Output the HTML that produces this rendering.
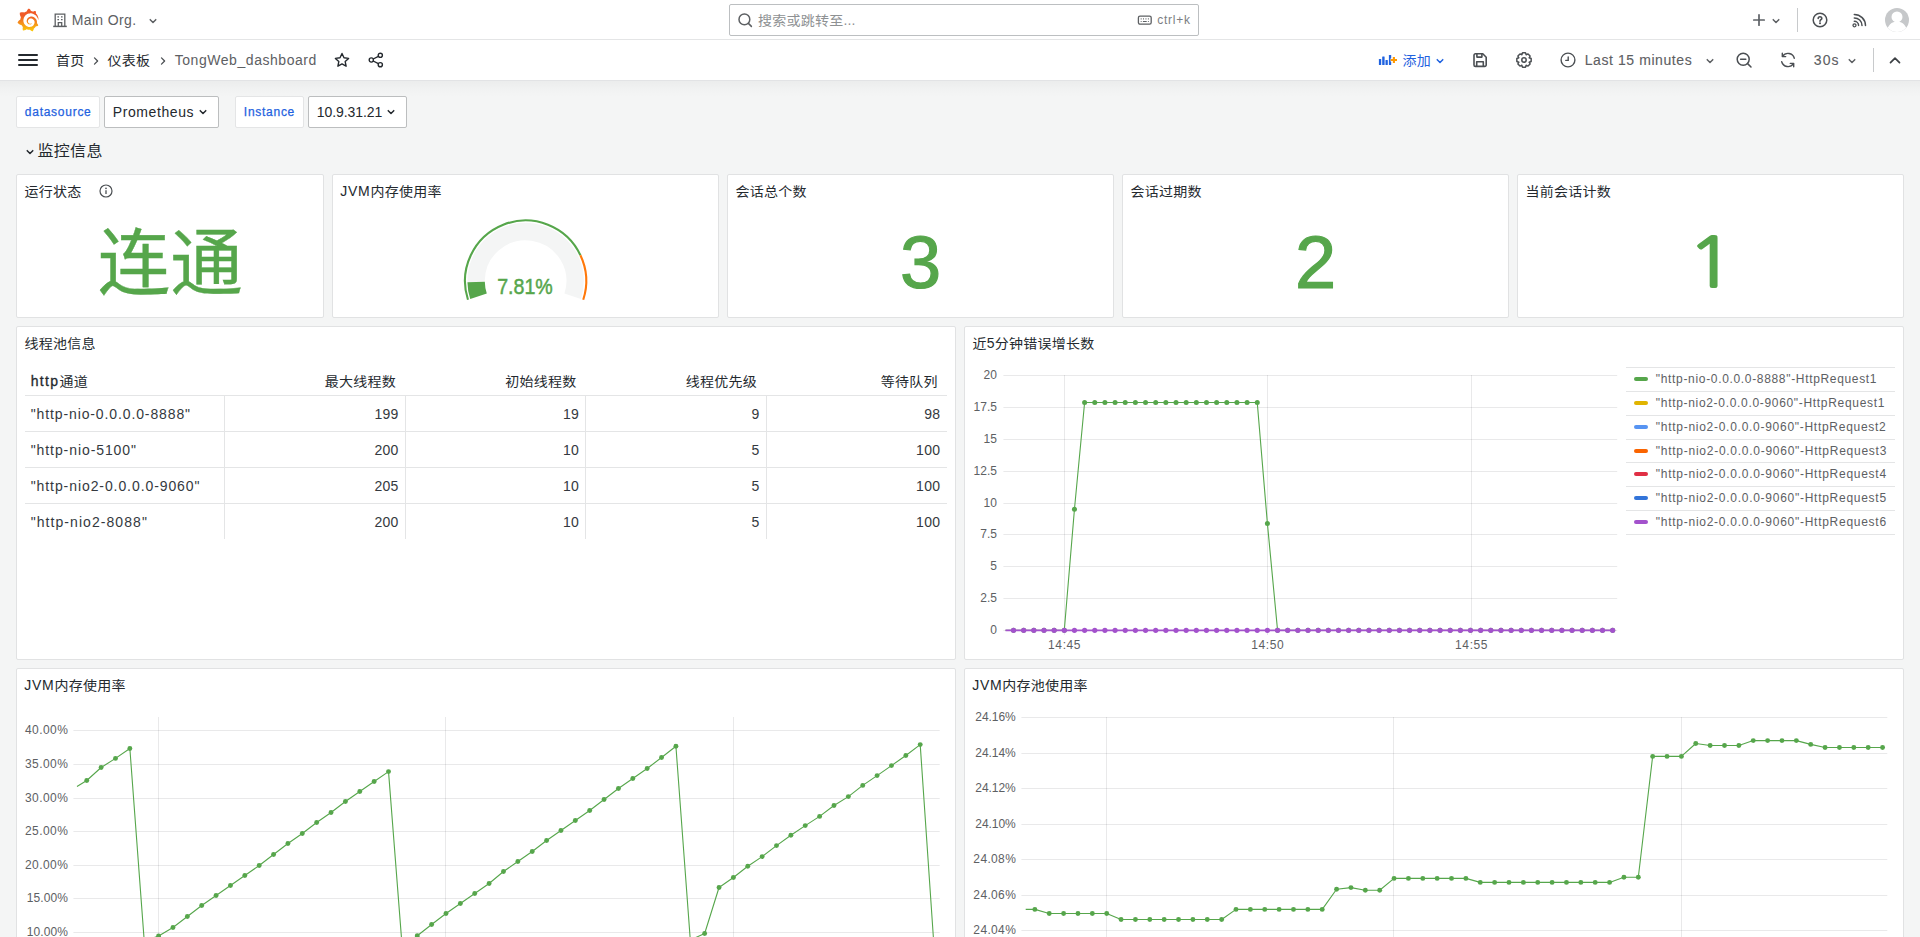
<!DOCTYPE html>
<html lang="zh-CN"><head><meta charset="utf-8"><title>TongWeb_dashboard - Grafana</title>
<style>
html,body{margin:0;padding:0}
body{width:1920px;height:937px;overflow:hidden;position:relative;background:#f4f5f5;font-family:"Liberation Sans","Noto Sans CJK SC",sans-serif;color:#24292e;-webkit-font-smoothing:antialiased}
.t{position:absolute;white-space:nowrap;line-height:1;display:block}
.b{position:absolute;box-sizing:border-box;display:block}
.p{position:absolute;box-sizing:border-box;background:#fff;border:1px solid #e1e2e3;border-radius:2px}
.c{-webkit-text-stroke:0;letter-spacing:.018em;display:inline-block;transform:scaleY(.92);transform-origin:50% 48%}
svg{overflow:visible}
svg text{font-family:"Liberation Sans","Noto Sans CJK SC",sans-serif}
</style></head><body>
<div class="b" style="left:0px;top:0px;width:1920px;height:40px;background:#fff;border-bottom:1px solid #e4e5e6"></div>
<div class="b" style="left:0px;top:40px;width:1920px;height:41px;background:#fff;border-bottom:1px solid #e2e3e5"></div>
<div class="b" style="left:0px;top:81px;width:1920px;height:16px;background:linear-gradient(rgba(0,0,0,.036),rgba(0,0,0,.012) 55%,rgba(0,0,0,0))"></div>
<svg class="b" style="left:17px;top:8px;" width="22" height="24" viewBox="0 0 351 365"><defs><linearGradient id="gl" gradientUnits="userSpaceOnUse" x1="175.5" y1="445.5" x2="175.5" y2="114"><stop offset="0" stop-color="#fff100"/><stop offset="1" stop-color="#f05a28"/></linearGradient></defs><path fill="url(#gl)" d="M342,161.2c-0.6-6.1-1.6-13.1-3.6-20.9c-2-7.7-5-16.2-9.4-25c-4.4-8.8-10.1-17.9-17.500-26.800c-2.900-3.500-6.100-6.900-9.500-10.200c5.100-20.300-6.200-37.900-6.200-37.900c-19.500-1.200-31.900,6.100-36.500,9.400c-0.800-0.300-1.500-0.700-2.300-1c-3.300-1.300-6.700-2.600-10.300-3.700c-3.500-1.100-7.100-2.100-10.800-3c-3.700-0.900-7.400-1.600-11.200-2.200c-0.700-0.100-1.300-0.200-2-0.300c-8.500-27.200-32.900-38.600-32.900-38.600c-27.300,17.300-32.400,41.500-32.400,41.500s-0.100,0.500-0.300,1.400c-1.500,0.400-3,0.900-4.500,1.300c-2.100,0.600-4.200,1.400-6.200,2.200c-2.100,0.800-4.100,1.600-6.200,2.500c-4.100,1.800-8.200,3.800-12.200,6c-3.900,2.200-7.700,4.600-11.400,7.100c-0.500-0.200-1-0.400-1-0.400c-37.800-14.400-71.300,2.900-71.300,2.900c-3.100,40.200,15.100,65.500,18.700,70.100c-0.900,2.500-1.700,5-2.500,7.500c-2.800,9.100-4.900,18.400-6.200,28.100c-0.200,1.400-0.400,2.800-0.500,4.200C18.800,192.700,8.500,228,8.500,228c29.100,33.500,63.100,35.600,63.100,35.600c0,0,0.100-0.100,0.100-0.100c4.300,7.700,9.300,15,14.900,21.900c2.400,2.900,4.800,5.600,7.400,8.300c-10.600,30.400,1.500,55.600,1.500,55.600c32.400,1.200,53.700-14.200,58.200-17.700c3.200,1.100,6.500,2.100,9.800,2.900c10,2.600,20.200,4.100,30.400,4.500c2.500,0.100,5.100,0.200,7.600,0.100l1.200,0l0.800,0l1.600,0l1.600-0.100l0,0.100c15.300,21.800,42.100,24.900,42.100,24.900c19.100-20.100,20.200-40.100,20.200-44.400l0,0c0,0,0-0.100,0-0.300c0-0.400,0-0.600,0-0.600l0,0c0-0.300,0-0.600,0-0.900c4-2.800,7.800-5.800,11.400-9.100c7.600-6.900,14.300-14.800,19.900-23.300c0.500-0.800,1-1.600,1.500-2.400c21.600,1.200,36.900-13.400,36.900-13.400c-3.600-22.500-16.400-33.500-19.100-35.600l0,0c0,0-0.100-0.100-0.300-0.200c-0.200-0.100-0.200-0.200-0.200-0.200c0,0,0,0,0,0c-0.100-0.100-0.300-0.200-0.500-0.300c0.100-1.400,0.200-2.700,0.300-4.100c0.200-2.400,0.200-4.900,0.200-7.300l0-1.800l0-0.900l0-0.500c0-0.600,0-0.400,0-0.600l-0.100-1.500l-0.100-2c0-0.700-0.100-1.300-0.200-1.900c-0.100-0.600-0.100-1.300-0.200-1.900l-0.200-1.900l-0.300-1.900c-0.400-2.500-0.800-4.900-1.400-7.400c-2.300-9.700-6.100-18.900-11-27.200c-5-8.300-11.200-15.600-18.300-21.800c-7-6.200-14.900-11.200-23.100-14.900c-8.300-3.700-16.900-6.100-25.500-7.200c-4.300-0.600-8.600-0.800-12.900-0.700l-1.600,0l-0.400,0c-0.100,0-0.600,0-0.500,0l-0.700,0l-1.600,0.100c-0.600,0-1.200,0.100-1.700,0.100c-2.200,0.200-4.400,0.500-6.500,0.900c-8.600,1.600-16.700,4.700-23.800,9c-7.100,4.300-13.300,9.600-18.300,15.600c-5,6-8.900,12.700-11.600,19.600c-2.700,6.900-4.200,14.100-4.600,21c-0.100,1.700-0.100,3.500-0.100,5.200c0,0.400,0,0.900,0,1.300l0.100,1.400c0.100,0.800,0.100,1.700,0.200,2.500c0.300,3.500,1,6.900,1.900,10.100c1.900,6.500,4.900,12.400,8.600,17.400c3.700,5,8.200,9.100,12.900,12.400c4.700,3.200,9.800,5.500,14.800,7c5,1.500,10,2.100,14.700,2.100c0.600,0,1.200,0,1.700,0c0.300,0,0.600,0,0.900,0c0.300,0,0.600,0,0.900-0.100c0.500,0,1-0.100,1.500-0.100c0.100,0,0.300,0,0.400-0.100l0.500-0.100c0.300,0,0.600-0.100,0.900-0.100c0.600-0.100,1.100-0.200,1.700-0.300c0.600-0.100,1.100-0.200,1.600-0.400c1.100-0.200,2.100-0.600,3.100-0.900c2-0.700,4-1.500,5.700-2.400c1.800-0.900,3.400-2,5-3c0.400-0.300,0.900-0.600,1.300-1c1.600-1.300,1.900-3.700,0.600-5.300c-1.100-1.400-3.100-1.800-4.700-0.900c-0.400,0.200-0.800,0.400-1.200,0.600c-1.400,0.700-2.800,1.300-4.300,1.800c-1.500,0.500-3.100,0.900-4.700,1.200c-0.800,0.100-1.600,0.200-2.500,0.300c-0.400,0-0.800,0.100-1.300,0.100c-0.400,0-0.900,0-1.200,0c-0.400,0-0.800,0-1.200,0c-0.500,0-1,0-1.500-0.100c0,0-0.300,0-0.100,0l-0.200,0l-0.300,0c-0.200,0-0.500,0-0.700-0.100c-0.500-0.100-0.900-0.100-1.400-0.200c-3.700-0.500-7.400-1.600-10.900-3.200c-3.600-1.600-7-3.800-10.100-6.600c-3.100-2.800-5.800-6.100-7.900-9.900c-2.100-3.800-3.600-8-4.300-12.400c-0.300-2.200-0.500-4.500-0.400-6.700c0-0.600,0.100-1.200,0.100-1.800c0,0.200,0-0.100,0-0.100l0-0.200l0-0.500c0-0.300,0.100-0.600,0.100-0.900c0.100-1.200,0.300-2.400,0.500-3.600c1.700-9.600,6.500-19,13.900-26.100c1.900-1.800,3.900-3.400,6-4.900c2.100-1.500,4.400-2.800,6.800-3.900c2.400-1.100,4.800-2,7.400-2.700c2.500-0.700,5.100-1.100,7.800-1.400c1.300-0.100,2.600-0.200,4-0.200c0.400,0,0.600,0,0.900,0l1.100,0l0.700,0c0.300,0,0,0,0.100,0l0.300,0l1.100,0.100c2.900,0.200,5.700,0.600,8.500,1.300c5.600,1.200,11.100,3.300,16.200,6.100c10.200,5.700,18.900,14.500,24.200,25.100c2.700,5.300,4.600,11,5.500,16.900c0.200,1.500,0.400,3,0.500,4.500l0.100,1.100l0.100,1.100c0,0.400,0,0.800,0,1.100c0,0.400,0,0.800,0,1.100l0,1l0,1.100c0,0.700-0.100,1.900-0.100,2.600c-0.100,1.600-0.300,3.300-0.500,4.900c-0.200,1.600-0.500,3.200-0.800,4.800c-0.300,1.600-0.700,3.200-1.100,4.700c-0.800,3.100-1.800,6.200-3,9.300c-2.400,6-5.600,11.800-9.400,17.100c-7.700,10.600-18.200,19.200-30.200,24.700c-6,2.700-12.300,4.700-18.800,5.700c-3.200,0.600-6.500,0.900-9.800,1l-0.600,0l-0.500,0l-1.100,0l-1.600,0l-0.800,0c0.400,0-0.100,0-0.100,0l-0.300,0c-1.800,0-3.500-0.100-5.300-0.300c-7-0.500-13.900-1.800-20.700-3.700c-6.700-1.900-13.200-4.600-19.400-7.800c-12.300-6.600-23.400-15.600-32-26.500c-4.300-5.400-8.100-11.300-11.200-17.400c-3.100-6.100-5.600-12.600-7.400-19.100c-1.800-6.600-2.900-13.300-3.400-20.100l-0.100-1.300l0-0.300l0-0.300l0-0.600l0-1.100l0-0.300l0-0.400l0-0.800l0-1.600l0-0.300c0,0,0,0.100,0-0.100l0-0.600c0-0.800,0-1.700,0-2.500c0.100-3.300,0.400-6.800,0.800-10.200c0.400-3.400,1-6.900,1.700-10.300c0.700-3.400,1.500-6.800,2.500-10.200c1.900-6.700,4.300-13.200,7.100-19.300c5.700-12.200,13.100-23.100,22-31.800c2.200-2.200,4.500-4.200,6.900-6.200c2.400-1.900,4.900-3.700,7.500-5.400c2.500-1.700,5.200-3.200,7.900-4.600c1.300-0.700,2.700-1.400,4.100-2c0.700-0.300,1.400-0.600,2.100-0.900c0.700-0.300,1.400-0.600,2.100-0.900c2.800-1.200,5.700-2.200,8.700-3.100c0.700-0.200,1.500-0.400,2.200-0.700c0.700-0.200,1.500-0.400,2.200-0.600c1.500-0.400,3-0.800,4.500-1.100c0.700-0.200,1.500-0.300,2.300-0.500c0.800-0.200,1.500-0.300,2.300-0.500c0.800-0.100,1.500-0.300,2.300-0.400l1.100-0.200l1.200-0.200c0.800-0.100,1.500-0.200,2.300-0.300c0.900-0.100,1.700-0.200,2.600-0.300c0.700-0.100,1.900-0.200,2.600-0.300c0.500-0.100,1.100-0.100,1.600-0.200l1.100-0.100l0.500-0.100l0.600,0c0.900-0.100,1.700-0.100,2.600-0.200l1.300-0.100c0,0,0.500,0,0.100,0l0.300,0l0.600,0c0.700,0,1.500-0.100,2.200-0.100c2.900-0.100,5.900-0.100,8.800,0c5.800,0.200,11.500,0.900,17,1.900c11.100,2.100,21.500,5.600,31,10.300c9.500,4.600,17.900,10.300,25.300,16.500c0.500,0.400,0.900,0.800,1.400,1.200c0.400,0.400,0.900,0.800,1.300,1.200c0.900,0.800,1.700,1.600,2.600,2.400c0.900,0.800,1.700,1.600,2.500,2.400c0.800,0.800,1.600,1.600,2.400,2.500c3.100,3.300,6,6.600,8.600,10c5.200,6.700,9.400,13.500,12.700,19.900c0.200,0.400,0.400,0.800,0.600,1.200c0.200,0.400,0.400,0.800,0.600,1.200c0.400,0.800,0.800,1.600,1.100,2.400c0.400,0.800,0.700,1.500,1.100,2.300c0.300,0.800,0.700,1.500,1,2.300c1.200,3,2.400,5.900,3.300,8.600c1.500,4.400,2.600,8.300,3.500,11.700c0.300,1.400,1.600,2.300,3,2.100c1.500-0.100,2.600-1.300,2.600-2.800C342.600,170.400,342.500,166.100,342,161.200z"/></svg>
<svg class="b" style="left:52px;top:12px;" width="16" height="16" viewBox="0 0 16 16"><g fill="none" stroke="#5d6063" stroke-width="1.3"><path d="M3.2 14.3V2.2h9.6v12.1"/><path d="M1.2 14.4h13.6" stroke-width="1.5"/><path d="M6.3 14.3v-3.6h3.4v3.6"/><path d="M5.4 4.9h1.6M9 4.9h1.6M5.4 7.6h1.6M9 7.6h1.6" stroke-width="1.4"/></g></svg>
<span id="t1" class="t" style="top:13.15px;font-size:14px;color:#5d6063;letter-spacing:0.359px;left:71.73px;">Main Org.</span>
<svg class="b" style="left:148px;top:16px;" width="10" height="10" viewBox="0 0 10 10"><path d="M2.23 3.66L5 6.43L7.77 3.66" fill="none" stroke="#5d6063" stroke-width="1.5" stroke-linecap="round" stroke-linejoin="round"/></svg>
<div class="b" style="left:729px;top:4px;width:470px;height:32px;background:#fff;border:1px solid #bcbfc1;border-radius:2px"></div>
<svg class="b" style="left:737px;top:12px;" width="16" height="16" viewBox="0 0 16 16"><g fill="none" stroke="#5d6063" stroke-width="1.5" stroke-linecap="round"><circle cx="7.4" cy="7.4" r="5.4"/><path d="M11.4 11.4L14.4 14.4"/></g></svg>
<span id="t2" class="t" style="top:13.15px;font-size:14px;color:#8e9193;letter-spacing:0.004px;left:758.08px;"><span class="c">搜索或跳转至</span>...</span>
<svg class="b" style="left:1137px;top:14px;" width="16" height="12" viewBox="0 0 16 12"><g fill="none" stroke="#5d6063" stroke-width="1.3"><rect x="1.400" y="2.100" width="12.800" height="8.100" rx="1.600"/><path d="M3.700 4.900h.9M6.100 4.900h.9M8.500 4.900h.9M10.900 4.900h.9M3.700 7.500h.9M5.900 7.500h3.800M10.900 7.500h.9" stroke-width="1.100"/></g></svg>
<span id="t3" class="t" style="top:13.84px;font-size:12px;color:#7b7e82;letter-spacing:0.781px;left:1157.14px;">ctrl+k</span>
<svg class="b" style="left:1753px;top:14px;" width="12" height="12" viewBox="0 0 12 12"><path d="M6 0.800V11.200M0.800 6H11.200" stroke="#5d6166" stroke-width="1.700" fill="none" stroke-linecap="round"/></svg>
<svg class="b" style="left:1771px;top:16px;" width="10" height="10" viewBox="0 0 10 10"><path d="M2.23 3.66L5 6.43L7.77 3.66" fill="none" stroke="#5d6063" stroke-width="1.5" stroke-linecap="round" stroke-linejoin="round"/></svg>
<div class="b" style="left:1797px;top:8px;width:1px;height:24px;background:#c8cacc"></div>
<svg class="b" style="left:1812px;top:12px;" width="16" height="16" viewBox="0 0 16 16"><g fill="none" stroke="#4b4f53" stroke-width="1.500"><circle cx="8" cy="8" r="6.800"/><path d="M6.200 6.500c0-1.100.8-1.800 1.800-1.800s1.800.7 1.800 1.700c0 1.300-1.800 1.400-1.800 2.800" stroke-width="1.600" stroke-linecap="round"/></g><circle cx="8" cy="11.300" r="1" fill="#4b4f53"/></svg>
<svg class="b" style="left:1852px;top:13px;" width="15" height="15" viewBox="0 0 15 15"><g fill="none" stroke="#4b4f53" stroke-width="1.500" stroke-linecap="round"><path d="M2.300 1.400a11.200 11.200 0 0 1 11.200 11"/><path d="M2.300 4.900a7.700 7.700 0 0 1 7.700 7.500"/><path d="M2.300 8.300a4.300 4.300 0 0 1 4.300 4.100"/></g><circle cx="2.500" cy="12.300" r="1.500" fill="none" stroke="#4b4f53" stroke-width="1.300"/></svg>
<svg class="b" style="left:1885px;top:8px;" width="24" height="24" viewBox="0 0 24 24"><defs><clipPath id="av"><circle cx="12" cy="12" r="12"/></clipPath></defs><circle cx="12" cy="12" r="12" fill="#c6c8ca"/><g clip-path="url(#av)" fill="#fff"><circle cx="12" cy="8.900" r="5.500"/><path d="M1.500 27c0-8.500 4.300-13.400 10.500-13.400s10.500 4.900 10.500 13.400z"/></g></svg>
<div class="b" style="left:18px;top:54px;width:20px;height:2px;background:#24292e;border-radius:1px"></div>
<div class="b" style="left:18px;top:59px;width:20px;height:2px;background:#24292e;border-radius:1px"></div>
<div class="b" style="left:18px;top:64px;width:20px;height:2px;background:#24292e;border-radius:1px"></div>
<span id="t4" class="t" style="top:53.35px;font-size:14px;color:#24292e;left:56.08px;"><span class="c">首页</span></span>
<svg class="b" style="left:92px;top:55px;" width="8" height="10" viewBox="0 0 8 10"><path d="M2.500 2.900L5.600 6L2.500 9.100" fill="none" stroke="#4b4f53" stroke-width="1.3" stroke-linecap="round" stroke-linejoin="round"/></svg>
<span id="t5" class="t" style="top:53.35px;font-size:14px;color:#24292e;left:107.58px;"><span class="c">仪表板</span></span>
<svg class="b" style="left:159px;top:55px;" width="8" height="10" viewBox="0 0 8 10"><path d="M2.500 2.900L5.600 6L2.500 9.100" fill="none" stroke="#4b4f53" stroke-width="1.3" stroke-linecap="round" stroke-linejoin="round"/></svg>
<span id="t6" class="t" style="top:53.15px;font-size:14px;color:#5d6063;letter-spacing:0.550px;left:174.73px;">TongWeb_dashboard</span>
<svg class="b" style="left:334px;top:52px;" width="16" height="16" viewBox="0 0 16 16"><path d="M8 1.5l2 4.3 4.6.6-3.4 3.2.9 4.6L8 11.9l-4.100 2.300.9-4.600L1.400 6.400l4.600-.6z" fill="none" stroke="#24292e" stroke-width="1.4" stroke-linejoin="round"/></svg>
<svg class="b" style="left:368px;top:52px;" width="16" height="16" viewBox="0 0 16 16"><g fill="none" stroke="#24292e" stroke-width="1.4"><circle cx="12.3" cy="3.3" r="2.1"/><circle cx="3.3" cy="8" r="2.1"/><circle cx="12.3" cy="12.700" r="2.1"/><path d="M5.200 7l5.200-2.700M5.200 9l5.200 2.700"/></g></svg>
<svg class="b" style="left:1378px;top:53px;" width="20" height="14" viewBox="0 0 20 14"><g fill="#1f62e0"><rect x="0.900" y="6" width="2.300" height="5.900" rx=".5"/><rect x="4.200" y="3.400" width="2.400" height="8.500" rx=".5"/><rect x="7.500" y="7" width="2.300" height="4.900" rx=".5"/><rect x="10.900" y="2" width="2.300" height="9.900" rx=".5"/></g><path d="M15.900 3.700v6.600M12.600 7h6.600" stroke="#fff" stroke-width="3.600" fill="none"/><path d="M15.900 3.900v6.200M12.800 7h6.200" stroke="#ff9900" stroke-width="2.100" fill="none"/></svg>
<span id="t7" class="t" style="top:53.35px;font-size:14px;color:#1f62e0;left:1402.58px;"><span class="c">添加</span></span>
<svg class="b" style="left:1435px;top:55.6px;" width="10" height="10" viewBox="0 0 10 10"><path d="M2.23 3.66L5 6.43L7.77 3.66" fill="none" stroke="#1f62e0" stroke-width="1.5" stroke-linecap="round" stroke-linejoin="round"/></svg>
<svg class="b" style="left:1472px;top:52px;" width="16" height="16" viewBox="0 0 16 16"><g fill="none" stroke="#4b4f53" stroke-width="1.600" stroke-linejoin="round"><path d="M3.400 1.800h7.400L14.200 5.200v7.800a1.400 1.400 0 0 1-1.400 1.400H3.400a1.400 1.400 0 0 1-1.400-1.400V3.200a1.400 1.400 0 0 1 1.400-1.400z"/><path d="M4.900 1.800v3.300h5V1.800M4.700 14.400V9.700h6.600v4.700"/></g></svg>
<svg class="b" style="left:1516px;top:52px;" width="16" height="16" viewBox="0 0 16 16"><g fill="none" stroke="#4b4f53" stroke-width="1.500" stroke-linejoin="round"><path d="M15.15 6.55L15.15 9.45L13.20 10.32L13.32 10.04L14.08 12.03L12.03 14.08L10.04 13.32L10.32 13.20L9.45 15.15L6.55 15.15L5.68 13.20L5.96 13.32L3.97 14.08L1.92 12.03L2.68 10.04L2.80 10.32L0.85 9.45L0.85 6.55L2.80 5.68L2.68 5.96L1.92 3.97L3.97 1.92L5.96 2.68L5.68 2.80L6.55 0.85L9.45 0.85L10.32 2.80L10.04 2.68L12.03 1.92L14.08 3.97L13.32 5.96L13.20 5.68Z"/><circle cx="8" cy="8" r="2.200"/></g></svg>
<svg class="b" style="left:1560px;top:52px;" width="16" height="16" viewBox="0 0 16 16"><g fill="none" stroke="#4b4f53" stroke-width="1.4" stroke-linecap="round"><circle cx="8" cy="8" r="6.9"/><path d="M8.200 5V8.400H5.800"/></g></svg>
<span id="t8" class="t" style="top:53.15px;font-size:14px;color:#5d6063;letter-spacing:0.577px;left:1584.73px;-webkit-text-stroke:.12px #5d6063;">Last 15 minutes</span>
<svg class="b" style="left:1705px;top:56px;" width="10" height="10" viewBox="0 0 10 10"><path d="M2.23 3.66L5 6.43L7.77 3.66" fill="none" stroke="#5d6063" stroke-width="1.5" stroke-linecap="round" stroke-linejoin="round"/></svg>
<svg class="b" style="left:1736px;top:52px;" width="16" height="16" viewBox="0 0 16 16"><g fill="none" stroke="#4b4f53" stroke-width="1.5" stroke-linecap="round"><circle cx="7.200" cy="7.200" r="6"/><path d="M11.600 11.600L15 15M4.600 7.200h5.200"/></g></svg>
<svg class="b" style="left:1780px;top:52px;" width="16" height="16" viewBox="0 0 16 16"><g fill="none" stroke="#4b4f53" stroke-width="1.4" stroke-linecap="round" stroke-linejoin="round"><path d="M14.300 6.200A6.500 6.500 0 0 0 2.600 4.300"/><path d="M2.300 1.200v3.400h3.400"/><path d="M1.700 9.800a6.500 6.500 0 0 0 11.700 1.900"/><path d="M13.700 14.800v-3.400h-3.400"/></g></svg>
<span id="t9" class="t" style="top:53.15px;font-size:14px;color:#5d6063;letter-spacing:1.141px;left:1813.73px;-webkit-text-stroke:.12px #5d6063;">30s</span>
<svg class="b" style="left:1847px;top:56px;" width="10" height="10" viewBox="0 0 10 10"><path d="M2.23 3.66L5 6.43L7.77 3.66" fill="none" stroke="#5d6063" stroke-width="1.5" stroke-linecap="round" stroke-linejoin="round"/></svg>
<div class="b" style="left:1873px;top:48px;width:1px;height:24px;background:#c8cacc"></div>
<svg class="b" style="left:1889px;top:55px;" width="12" height="10" viewBox="0 0 12 10"><path d="M1.500 7.600L6 3.100L10.500 7.600" fill="none" stroke="#3d4145" stroke-width="1.700" stroke-linecap="round" stroke-linejoin="round"/></svg>
<div class="b" style="left:16px;top:96px;width:84px;height:32px;background:#fff;border:1px solid #e4e5e6;border-radius:2px"></div>
<span id="t10" class="t" style="top:106.04px;font-size:12px;color:#1f62e0;letter-spacing:0.733px;left:24.84px;-webkit-text-stroke:.25px #1f62e0;">datasource</span>
<div class="b" style="left:104px;top:96px;width:115px;height:32px;background:#fff;border:1px solid #bcbebf;border-radius:2px"></div>
<span id="t11" class="t" style="top:105.15px;font-size:14px;color:#24292e;letter-spacing:0.592px;left:112.73px;">Prometheus</span>
<svg class="b" style="left:198px;top:107px;" width="10" height="10" viewBox="0 0 10 10"><path d="M2.23 3.66L5 6.43L7.77 3.66" fill="none" stroke="#24292e" stroke-width="1.5" stroke-linecap="round" stroke-linejoin="round"/></svg>
<div class="b" style="left:235px;top:96px;width:69px;height:32px;background:#fff;border:1px solid #e4e5e6;border-radius:2px"></div>
<span id="t12" class="t" style="top:106.04px;font-size:12px;color:#1f62e0;letter-spacing:0.728px;left:243.84px;-webkit-text-stroke:.25px #1f62e0;">Instance</span>
<div class="b" style="left:308px;top:96px;width:99px;height:32px;background:#fff;border:1px solid #bcbebf;border-radius:2px"></div>
<span id="t13" class="t" style="top:105.15px;font-size:14px;color:#24292e;letter-spacing:-0.077px;left:316.73px;">10.9.31.21</span>
<svg class="b" style="left:386px;top:107px;" width="10" height="10" viewBox="0 0 10 10"><path d="M2.23 3.66L5 6.43L7.77 3.66" fill="none" stroke="#24292e" stroke-width="1.5" stroke-linecap="round" stroke-linejoin="round"/></svg>
<svg class="b" style="left:25px;top:147px;" width="10" height="10" viewBox="0 0 10 10"><path d="M2.23 3.66L5 6.43L7.77 3.66" fill="none" stroke="#24292e" stroke-width="1.5" stroke-linecap="round" stroke-linejoin="round"/></svg>
<span id="t14" class="t" style="top:143.46px;font-size:16px;color:#24292e;left:37.52px;"><span class="c">监控信息</span></span>
<div class="p" style="left:16px;top:174px;width:308px;height:144px"></div>
<div class="p" style="left:332px;top:174px;width:387px;height:144px"></div>
<div class="p" style="left:727px;top:174px;width:387px;height:144px"></div>
<div class="p" style="left:1122px;top:174px;width:387px;height:144px"></div>
<div class="p" style="left:1517px;top:174px;width:387px;height:144px"></div>
<span id="t15" class="t" style="top:184.35px;font-size:14px;color:#24292e;left:24.58px;"><span class="c">运行状态</span></span>
<svg class="b" style="left:99px;top:184px;" width="14" height="14" viewBox="0 0 14 14"><circle cx="7" cy="7" r="6" fill="none" stroke="#4b4f53" stroke-width="1.2"/><path d="M7 6.300v3.600" stroke="#4b4f53" stroke-width="1.300" fill="none"/><circle cx="7" cy="4.300" r=".85" fill="#4b4f53"/></svg>
<span id="t16" class="t" style="top:184.35px;font-size:14px;color:#24292e;letter-spacing:0.745px;left:340.23px;">JVM<span class="c">内存使用率</span></span>
<span id="t17" class="t" style="top:184.35px;font-size:14px;color:#24292e;left:735.58px;"><span class="c">会话总个数</span></span>
<span id="t18" class="t" style="top:184.35px;font-size:14px;color:#24292e;left:1130.58px;"><span class="c">会话过期数</span></span>
<span id="t19" class="t" style="top:184.35px;font-size:14px;color:#24292e;left:1525.58px;"><span class="c">当前会话计数</span></span>
<span id="t20" class="t" style="top:227.83px;font-size:72.5px;color:#56a64b;left:170.20px;transform:translateX(-50%);-webkit-text-stroke:0.4px #56a64b;">连通</span>
<span id="t21" class="t" style="top:225.86px;font-size:74px;color:#56a64b;left:920.60px;transform:translateX(-50%);-webkit-text-stroke:1.2px #56a64b;">3</span>
<span id="t22" class="t" style="top:225.76px;font-size:74px;color:#56a64b;left:1315.60px;transform:translateX(-50%);-webkit-text-stroke:1.2px #56a64b;">2</span>
<span id="t23" class="t" style="top:228.60px;font-size:68px;color:#56a64b;left:1711.40px;transform:translateX(-50%);font-family:NanumGothic,IPAGothic,sans-serif;-webkit-text-stroke:2px #56a64b;transform:translateX(-50%) scaleX(1.17);">1</span>
<svg class="b" style="left:0;top:0" width="1920" height="937" viewBox="0 0 1920 937"><path d="M476.11 281.98A49.5 49.5 0 1 1 572.68 296.30" fill="none" stroke="#f4f5f5" stroke-width="17.4"/><path d="M478.52 296.30A49.5 49.5 0 0 1 476.11 281.98" fill="none" stroke="#56a64b" stroke-width="17.4"/><path d="M467.97 299.73A60.6 60.6 0 0 1 580.43 255.20" fill="none" stroke="#56a64b" stroke-width="2.1"/><path d="M580.43 255.20A60.6 60.6 0 0 1 583.23 299.73" fill="none" stroke="#ff780a" stroke-width="2.1"/></svg>
<span id="t24" class="t" style="top:275.97px;font-size:22.6px;color:#56a64b;left:524.90px;transform:translateX(-50%);-webkit-text-stroke:.5px #56a64b;transform:translateX(-50%) scaleX(.868);">7.81%</span>
<div class="p" style="left:16px;top:326px;width:940px;height:334px"></div>
<span id="t25" class="t" style="top:336.35px;font-size:14px;color:#24292e;left:24.58px;"><span class="c">线程池信息</span></span>
<span id="t26" class="t" style="top:373.95px;font-size:14px;color:#24292e;letter-spacing:1.331px;left:30.73px;-webkit-text-stroke:.3px #24292e;">http<span class="c">通道</span></span>
<span id="t27" class="t" style="top:373.95px;font-size:14px;color:#24292e;right:1524.00px;"><span class="c">最大线程数</span></span>
<span id="t28" class="t" style="top:373.95px;font-size:14px;color:#24292e;right:1343.50px;"><span class="c">初始线程数</span></span>
<span id="t29" class="t" style="top:373.95px;font-size:14px;color:#24292e;right:1163.00px;"><span class="c">线程优先级</span></span>
<span id="t30" class="t" style="top:373.95px;font-size:14px;color:#24292e;right:982.30px;"><span class="c">等待队列</span></span>
<div class="b" style="left:25px;top:395px;width:922px;height:1px;background:#e4e5e6"></div>
<span id="t31" class="t" style="top:407.15px;font-size:14px;color:#34393e;letter-spacing:0.882px;left:30.73px;">"http-nio-0.0.0.0-8888"</span>
<span id="t32" class="t" style="top:407.15px;font-size:14px;color:#34393e;right:1521.50px;letter-spacing:.25px;">199</span>
<span id="t33" class="t" style="top:407.15px;font-size:14px;color:#34393e;right:1341.00px;letter-spacing:.25px;">19</span>
<span id="t34" class="t" style="top:407.15px;font-size:14px;color:#34393e;right:1160.50px;letter-spacing:.25px;">9</span>
<span id="t35" class="t" style="top:407.15px;font-size:14px;color:#34393e;right:979.80px;letter-spacing:.25px;">98</span>
<div class="b" style="left:25px;top:431px;width:922px;height:1px;background:#e4e5e6"></div>
<span id="t36" class="t" style="top:443.15px;font-size:14px;color:#34393e;letter-spacing:0.916px;left:30.73px;">"http-nio-5100"</span>
<span id="t37" class="t" style="top:443.15px;font-size:14px;color:#34393e;right:1521.50px;letter-spacing:.25px;">200</span>
<span id="t38" class="t" style="top:443.15px;font-size:14px;color:#34393e;right:1341.00px;letter-spacing:.25px;">10</span>
<span id="t39" class="t" style="top:443.15px;font-size:14px;color:#34393e;right:1160.50px;letter-spacing:.25px;">5</span>
<span id="t40" class="t" style="top:443.15px;font-size:14px;color:#34393e;right:979.80px;letter-spacing:.25px;">100</span>
<div class="b" style="left:25px;top:467px;width:922px;height:1px;background:#e4e5e6"></div>
<span id="t41" class="t" style="top:479.15px;font-size:14px;color:#34393e;letter-spacing:0.916px;left:30.73px;">"http-nio2-0.0.0.0-9060"</span>
<span id="t42" class="t" style="top:479.15px;font-size:14px;color:#34393e;right:1521.50px;letter-spacing:.25px;">205</span>
<span id="t43" class="t" style="top:479.15px;font-size:14px;color:#34393e;right:1341.00px;letter-spacing:.25px;">10</span>
<span id="t44" class="t" style="top:479.15px;font-size:14px;color:#34393e;right:1160.50px;letter-spacing:.25px;">5</span>
<span id="t45" class="t" style="top:479.15px;font-size:14px;color:#34393e;right:979.80px;letter-spacing:.25px;">100</span>
<div class="b" style="left:25px;top:503px;width:922px;height:1px;background:#e4e5e6"></div>
<span id="t46" class="t" style="top:515.15px;font-size:14px;color:#34393e;letter-spacing:1.060px;left:30.73px;">"http-nio2-8088"</span>
<span id="t47" class="t" style="top:515.15px;font-size:14px;color:#34393e;right:1521.50px;letter-spacing:.25px;">200</span>
<span id="t48" class="t" style="top:515.15px;font-size:14px;color:#34393e;right:1341.00px;letter-spacing:.25px;">10</span>
<span id="t49" class="t" style="top:515.15px;font-size:14px;color:#34393e;right:1160.50px;letter-spacing:.25px;">5</span>
<span id="t50" class="t" style="top:515.15px;font-size:14px;color:#34393e;right:979.80px;letter-spacing:.25px;">100</span>
<div class="b" style="left:224.2px;top:396px;width:1px;height:143px;background:#e4e5e6"></div>
<div class="b" style="left:404.8px;top:396px;width:1px;height:143px;background:#e4e5e6"></div>
<div class="b" style="left:585.3px;top:396px;width:1px;height:143px;background:#e4e5e6"></div>
<div class="b" style="left:765.8px;top:396px;width:1px;height:143px;background:#e4e5e6"></div>
<div class="p" style="left:964px;top:326px;width:940px;height:334px"></div>
<span id="t51" class="t" style="top:336.35px;font-size:14px;color:#24292e;left:972.58px;"><span class="c">近</span>5<span class="c">分钟错误增长数</span></span>
<svg class="b" style="left:0;top:0" width="1920" height="937" viewBox="0 0 1920 937"><path d="M1003.4 630.50H1617.2" stroke="rgba(36,41,46,.1)" stroke-width="1"/><path d="M1003.4 598.50H1617.2" stroke="rgba(36,41,46,.1)" stroke-width="1"/><path d="M1003.4 566.50H1617.2" stroke="rgba(36,41,46,.1)" stroke-width="1"/><path d="M1003.4 534.50H1617.2" stroke="rgba(36,41,46,.1)" stroke-width="1"/><path d="M1003.4 503.50H1617.2" stroke="rgba(36,41,46,.1)" stroke-width="1"/><path d="M1003.4 471.50H1617.2" stroke="rgba(36,41,46,.1)" stroke-width="1"/><path d="M1003.4 439.50H1617.2" stroke="rgba(36,41,46,.1)" stroke-width="1"/><path d="M1003.4 407.50H1617.2" stroke="rgba(36,41,46,.1)" stroke-width="1"/><path d="M1003.4 375.50H1617.2" stroke="rgba(36,41,46,.1)" stroke-width="1"/><path d="M1064.50 375.0V635.0" stroke="rgba(36,41,46,.1)" stroke-width="1"/><path d="M1267.50 375.0V635.0" stroke="rgba(36,41,46,.1)" stroke-width="1"/><path d="M1471.50 375.0V635.0" stroke="rgba(36,41,46,.1)" stroke-width="1"/><path d="M1005.50 630.30L1013.52 630.30L1023.68 630.30L1033.84 630.30L1043.99 630.30L1054.14 630.30L1064.30 630.30L1074.45 509.27L1084.61 402.50L1094.76 402.50L1104.92 402.50L1115.08 402.50L1125.23 402.50L1135.38 402.50L1145.54 402.50L1155.69 402.50L1165.85 402.50L1176.01 402.50L1186.16 402.50L1196.32 402.50L1206.47 402.50L1216.62 402.50L1226.78 402.50L1236.93 402.50L1247.09 402.50L1257.25 402.50L1267.40 523.54L1277.56 630.30L1287.71 630.30L1297.87 630.30L1308.02 630.30L1318.18 630.30L1328.33 630.30L1338.49 630.30L1348.64 630.30L1358.80 630.30L1368.95 630.30L1379.11 630.30L1389.26 630.30L1399.42 630.30L1409.57 630.30L1419.73 630.30L1429.88 630.30L1440.04 630.30L1450.19 630.30L1460.35 630.30L1470.50 630.30L1480.66 630.30L1490.81 630.30L1500.97 630.30L1511.12 630.30L1521.28 630.30L1531.43 630.30L1541.59 630.30L1551.74 630.30L1561.90 630.30L1572.05 630.30L1582.21 630.30L1592.36 630.30L1602.52 630.30L1612.67 630.30" fill="none" stroke="#56a64b" stroke-width="1.1" stroke-linejoin="round"/><circle cx="1013.52" cy="630.30" r="2.5" fill="#56a64b"/><circle cx="1023.68" cy="630.30" r="2.5" fill="#56a64b"/><circle cx="1033.84" cy="630.30" r="2.5" fill="#56a64b"/><circle cx="1043.99" cy="630.30" r="2.5" fill="#56a64b"/><circle cx="1054.14" cy="630.30" r="2.5" fill="#56a64b"/><circle cx="1064.30" cy="630.30" r="2.5" fill="#56a64b"/><circle cx="1074.45" cy="509.27" r="2.5" fill="#56a64b"/><circle cx="1084.61" cy="402.50" r="2.5" fill="#56a64b"/><circle cx="1094.76" cy="402.50" r="2.5" fill="#56a64b"/><circle cx="1104.92" cy="402.50" r="2.5" fill="#56a64b"/><circle cx="1115.08" cy="402.50" r="2.5" fill="#56a64b"/><circle cx="1125.23" cy="402.50" r="2.5" fill="#56a64b"/><circle cx="1135.38" cy="402.50" r="2.5" fill="#56a64b"/><circle cx="1145.54" cy="402.50" r="2.5" fill="#56a64b"/><circle cx="1155.69" cy="402.50" r="2.5" fill="#56a64b"/><circle cx="1165.85" cy="402.50" r="2.5" fill="#56a64b"/><circle cx="1176.01" cy="402.50" r="2.5" fill="#56a64b"/><circle cx="1186.16" cy="402.50" r="2.5" fill="#56a64b"/><circle cx="1196.32" cy="402.50" r="2.5" fill="#56a64b"/><circle cx="1206.47" cy="402.50" r="2.5" fill="#56a64b"/><circle cx="1216.62" cy="402.50" r="2.5" fill="#56a64b"/><circle cx="1226.78" cy="402.50" r="2.5" fill="#56a64b"/><circle cx="1236.93" cy="402.50" r="2.5" fill="#56a64b"/><circle cx="1247.09" cy="402.50" r="2.5" fill="#56a64b"/><circle cx="1257.25" cy="402.50" r="2.5" fill="#56a64b"/><circle cx="1267.40" cy="523.54" r="2.5" fill="#56a64b"/><circle cx="1277.56" cy="630.30" r="2.5" fill="#56a64b"/><circle cx="1287.71" cy="630.30" r="2.5" fill="#56a64b"/><circle cx="1297.87" cy="630.30" r="2.5" fill="#56a64b"/><circle cx="1308.02" cy="630.30" r="2.5" fill="#56a64b"/><circle cx="1318.18" cy="630.30" r="2.5" fill="#56a64b"/><circle cx="1328.33" cy="630.30" r="2.5" fill="#56a64b"/><circle cx="1338.49" cy="630.30" r="2.5" fill="#56a64b"/><circle cx="1348.64" cy="630.30" r="2.5" fill="#56a64b"/><circle cx="1358.80" cy="630.30" r="2.5" fill="#56a64b"/><circle cx="1368.95" cy="630.30" r="2.5" fill="#56a64b"/><circle cx="1379.11" cy="630.30" r="2.5" fill="#56a64b"/><circle cx="1389.26" cy="630.30" r="2.5" fill="#56a64b"/><circle cx="1399.42" cy="630.30" r="2.5" fill="#56a64b"/><circle cx="1409.57" cy="630.30" r="2.5" fill="#56a64b"/><circle cx="1419.73" cy="630.30" r="2.5" fill="#56a64b"/><circle cx="1429.88" cy="630.30" r="2.5" fill="#56a64b"/><circle cx="1440.04" cy="630.30" r="2.5" fill="#56a64b"/><circle cx="1450.19" cy="630.30" r="2.5" fill="#56a64b"/><circle cx="1460.35" cy="630.30" r="2.5" fill="#56a64b"/><circle cx="1470.50" cy="630.30" r="2.5" fill="#56a64b"/><circle cx="1480.66" cy="630.30" r="2.5" fill="#56a64b"/><circle cx="1490.81" cy="630.30" r="2.5" fill="#56a64b"/><circle cx="1500.97" cy="630.30" r="2.5" fill="#56a64b"/><circle cx="1511.12" cy="630.30" r="2.5" fill="#56a64b"/><circle cx="1521.28" cy="630.30" r="2.5" fill="#56a64b"/><circle cx="1531.43" cy="630.30" r="2.5" fill="#56a64b"/><circle cx="1541.59" cy="630.30" r="2.5" fill="#56a64b"/><circle cx="1551.74" cy="630.30" r="2.5" fill="#56a64b"/><circle cx="1561.90" cy="630.30" r="2.5" fill="#56a64b"/><circle cx="1572.05" cy="630.30" r="2.5" fill="#56a64b"/><circle cx="1582.21" cy="630.30" r="2.5" fill="#56a64b"/><circle cx="1592.36" cy="630.30" r="2.5" fill="#56a64b"/><circle cx="1602.52" cy="630.30" r="2.5" fill="#56a64b"/><circle cx="1612.67" cy="630.30" r="2.5" fill="#56a64b"/><path d="M1005.50 630.30L1013.52 630.30L1023.68 630.30L1033.84 630.30L1043.99 630.30L1054.14 630.30L1064.30 630.30L1074.45 630.30L1084.61 630.30L1094.76 630.30L1104.92 630.30L1115.08 630.30L1125.23 630.30L1135.38 630.30L1145.54 630.30L1155.69 630.30L1165.85 630.30L1176.01 630.30L1186.16 630.30L1196.32 630.30L1206.47 630.30L1216.62 630.30L1226.78 630.30L1236.93 630.30L1247.09 630.30L1257.25 630.30L1267.40 630.30L1277.56 630.30L1287.71 630.30L1297.87 630.30L1308.02 630.30L1318.18 630.30L1328.33 630.30L1338.49 630.30L1348.64 630.30L1358.80 630.30L1368.95 630.30L1379.11 630.30L1389.26 630.30L1399.42 630.30L1409.57 630.30L1419.73 630.30L1429.88 630.30L1440.04 630.30L1450.19 630.30L1460.35 630.30L1470.50 630.30L1480.66 630.30L1490.81 630.30L1500.97 630.30L1511.12 630.30L1521.28 630.30L1531.43 630.30L1541.59 630.30L1551.74 630.30L1561.90 630.30L1572.05 630.30L1582.21 630.30L1592.36 630.30L1602.52 630.30L1612.67 630.30" fill="none" stroke="#a352cc" stroke-width="1.7" stroke-linejoin="round"/><circle cx="1013.52" cy="630.30" r="2.6" fill="#a352cc"/><circle cx="1023.68" cy="630.30" r="2.6" fill="#a352cc"/><circle cx="1033.84" cy="630.30" r="2.6" fill="#a352cc"/><circle cx="1043.99" cy="630.30" r="2.6" fill="#a352cc"/><circle cx="1054.14" cy="630.30" r="2.6" fill="#a352cc"/><circle cx="1064.30" cy="630.30" r="2.6" fill="#a352cc"/><circle cx="1074.45" cy="630.30" r="2.6" fill="#a352cc"/><circle cx="1084.61" cy="630.30" r="2.6" fill="#a352cc"/><circle cx="1094.76" cy="630.30" r="2.6" fill="#a352cc"/><circle cx="1104.92" cy="630.30" r="2.6" fill="#a352cc"/><circle cx="1115.08" cy="630.30" r="2.6" fill="#a352cc"/><circle cx="1125.23" cy="630.30" r="2.6" fill="#a352cc"/><circle cx="1135.38" cy="630.30" r="2.6" fill="#a352cc"/><circle cx="1145.54" cy="630.30" r="2.6" fill="#a352cc"/><circle cx="1155.69" cy="630.30" r="2.6" fill="#a352cc"/><circle cx="1165.85" cy="630.30" r="2.6" fill="#a352cc"/><circle cx="1176.01" cy="630.30" r="2.6" fill="#a352cc"/><circle cx="1186.16" cy="630.30" r="2.6" fill="#a352cc"/><circle cx="1196.32" cy="630.30" r="2.6" fill="#a352cc"/><circle cx="1206.47" cy="630.30" r="2.6" fill="#a352cc"/><circle cx="1216.62" cy="630.30" r="2.6" fill="#a352cc"/><circle cx="1226.78" cy="630.30" r="2.6" fill="#a352cc"/><circle cx="1236.93" cy="630.30" r="2.6" fill="#a352cc"/><circle cx="1247.09" cy="630.30" r="2.6" fill="#a352cc"/><circle cx="1257.25" cy="630.30" r="2.6" fill="#a352cc"/><circle cx="1267.40" cy="630.30" r="2.6" fill="#a352cc"/><circle cx="1277.56" cy="630.30" r="2.6" fill="#a352cc"/><circle cx="1287.71" cy="630.30" r="2.6" fill="#a352cc"/><circle cx="1297.87" cy="630.30" r="2.6" fill="#a352cc"/><circle cx="1308.02" cy="630.30" r="2.6" fill="#a352cc"/><circle cx="1318.18" cy="630.30" r="2.6" fill="#a352cc"/><circle cx="1328.33" cy="630.30" r="2.6" fill="#a352cc"/><circle cx="1338.49" cy="630.30" r="2.6" fill="#a352cc"/><circle cx="1348.64" cy="630.30" r="2.6" fill="#a352cc"/><circle cx="1358.80" cy="630.30" r="2.6" fill="#a352cc"/><circle cx="1368.95" cy="630.30" r="2.6" fill="#a352cc"/><circle cx="1379.11" cy="630.30" r="2.6" fill="#a352cc"/><circle cx="1389.26" cy="630.30" r="2.6" fill="#a352cc"/><circle cx="1399.42" cy="630.30" r="2.6" fill="#a352cc"/><circle cx="1409.57" cy="630.30" r="2.6" fill="#a352cc"/><circle cx="1419.73" cy="630.30" r="2.6" fill="#a352cc"/><circle cx="1429.88" cy="630.30" r="2.6" fill="#a352cc"/><circle cx="1440.04" cy="630.30" r="2.6" fill="#a352cc"/><circle cx="1450.19" cy="630.30" r="2.6" fill="#a352cc"/><circle cx="1460.35" cy="630.30" r="2.6" fill="#a352cc"/><circle cx="1470.50" cy="630.30" r="2.6" fill="#a352cc"/><circle cx="1480.66" cy="630.30" r="2.6" fill="#a352cc"/><circle cx="1490.81" cy="630.30" r="2.6" fill="#a352cc"/><circle cx="1500.97" cy="630.30" r="2.6" fill="#a352cc"/><circle cx="1511.12" cy="630.30" r="2.6" fill="#a352cc"/><circle cx="1521.28" cy="630.30" r="2.6" fill="#a352cc"/><circle cx="1531.43" cy="630.30" r="2.6" fill="#a352cc"/><circle cx="1541.59" cy="630.30" r="2.6" fill="#a352cc"/><circle cx="1551.74" cy="630.30" r="2.6" fill="#a352cc"/><circle cx="1561.90" cy="630.30" r="2.6" fill="#a352cc"/><circle cx="1572.05" cy="630.30" r="2.6" fill="#a352cc"/><circle cx="1582.21" cy="630.30" r="2.6" fill="#a352cc"/><circle cx="1592.36" cy="630.30" r="2.6" fill="#a352cc"/><circle cx="1602.52" cy="630.30" r="2.6" fill="#a352cc"/><circle cx="1612.67" cy="630.30" r="2.6" fill="#a352cc"/></svg>
<span id="t52" class="t" style="top:624.24px;font-size:12px;color:#5d6063;right:923.10px;">0</span>
<span id="t53" class="t" style="top:592.24px;font-size:12px;color:#5d6063;right:923.10px;">2.5</span>
<span id="t54" class="t" style="top:560.24px;font-size:12px;color:#5d6063;right:923.10px;">5</span>
<span id="t55" class="t" style="top:528.24px;font-size:12px;color:#5d6063;right:923.10px;">7.5</span>
<span id="t56" class="t" style="top:497.24px;font-size:12px;color:#5d6063;right:923.10px;">10</span>
<span id="t57" class="t" style="top:465.24px;font-size:12px;color:#5d6063;right:923.10px;">12.5</span>
<span id="t58" class="t" style="top:433.24px;font-size:12px;color:#5d6063;right:923.10px;">15</span>
<span id="t59" class="t" style="top:401.24px;font-size:12px;color:#5d6063;right:923.10px;">17.5</span>
<span id="t60" class="t" style="top:369.24px;font-size:12px;color:#5d6063;right:923.10px;">20</span>
<span id="t61" class="t" style="top:639.04px;font-size:12px;color:#5d6063;letter-spacing:0.594px;left:1064.60px;transform:translateX(-50%);">14:45</span>
<span id="t62" class="t" style="top:639.04px;font-size:12px;color:#5d6063;letter-spacing:0.594px;left:1267.70px;transform:translateX(-50%);">14:50</span>
<span id="t63" class="t" style="top:639.04px;font-size:12px;color:#5d6063;letter-spacing:0.594px;left:1471.60px;transform:translateX(-50%);">14:55</span>
<div class="b" style="left:1626px;top:367px;width:269px;height:1px;background:#e4e5e6"></div>
<div class="b" style="left:1634px;top:377px;width:14px;height:4px;background:#56a64b;border-radius:2px"></div>
<span id="t64" class="t" style="top:373.04px;font-size:12px;color:#5d6063;letter-spacing:0.669px;left:1655.84px;">"http-nio-0.0.0.0-8888"-HttpRequest1</span>
<div class="b" style="left:1626px;top:391px;width:269px;height:1px;background:#e4e5e6"></div>
<div class="b" style="left:1634px;top:401px;width:14px;height:4px;background:#e0b400;border-radius:2px"></div>
<span id="t65" class="t" style="top:397.04px;font-size:12px;color:#5d6063;letter-spacing:0.682px;left:1655.84px;">"http-nio2-0.0.0.0-9060"-HttpRequest1</span>
<div class="b" style="left:1626px;top:415px;width:269px;height:1px;background:#e4e5e6"></div>
<div class="b" style="left:1634px;top:425px;width:14px;height:4px;background:#5794f2;border-radius:2px"></div>
<span id="t66" class="t" style="top:421.04px;font-size:12px;color:#5d6063;letter-spacing:0.722px;left:1655.84px;">"http-nio2-0.0.0.0-9060"-HttpRequest2</span>
<div class="b" style="left:1626px;top:439px;width:269px;height:1px;background:#e4e5e6"></div>
<div class="b" style="left:1634px;top:449px;width:14px;height:4px;background:#fa6400;border-radius:2px"></div>
<span id="t67" class="t" style="top:445.04px;font-size:12px;color:#5d6063;letter-spacing:0.736px;left:1655.84px;">"http-nio2-0.0.0.0-9060"-HttpRequest3</span>
<div class="b" style="left:1626px;top:462px;width:269px;height:1px;background:#e4e5e6"></div>
<div class="b" style="left:1634px;top:472px;width:14px;height:4px;background:#e02f44;border-radius:2px"></div>
<span id="t68" class="t" style="top:468.04px;font-size:12px;color:#5d6063;letter-spacing:0.730px;left:1655.84px;">"http-nio2-0.0.0.0-9060"-HttpRequest4</span>
<div class="b" style="left:1626px;top:486px;width:269px;height:1px;background:#e4e5e6"></div>
<div class="b" style="left:1634px;top:496px;width:14px;height:4px;background:#3274d9;border-radius:2px"></div>
<span id="t69" class="t" style="top:492.04px;font-size:12px;color:#5d6063;letter-spacing:0.730px;left:1655.84px;">"http-nio2-0.0.0.0-9060"-HttpRequest5</span>
<div class="b" style="left:1626px;top:510px;width:269px;height:1px;background:#e4e5e6"></div>
<div class="b" style="left:1634px;top:520px;width:14px;height:4px;background:#a352cc;border-radius:2px"></div>
<span id="t70" class="t" style="top:516.04px;font-size:12px;color:#5d6063;letter-spacing:0.730px;left:1655.84px;">"http-nio2-0.0.0.0-9060"-HttpRequest6</span>
<div class="b" style="left:1626px;top:534px;width:269px;height:1px;background:#e4e5e6"></div>
<div class="p" style="left:16px;top:668px;width:940px;height:334px"></div>
<span id="t71" class="t" style="top:678.35px;font-size:14px;color:#24292e;letter-spacing:0.745px;left:24.23px;">JVM<span class="c">内存使用率</span></span>
<svg class="b" style="left:0;top:0" width="1920" height="937" viewBox="0 0 1920 937"><path d="M73.4 932.50H939.7" stroke="rgba(36,41,46,.1)" stroke-width="1"/><path d="M73.4 898.50H939.7" stroke="rgba(36,41,46,.1)" stroke-width="1"/><path d="M73.4 865.50H939.7" stroke="rgba(36,41,46,.1)" stroke-width="1"/><path d="M73.4 831.50H939.7" stroke="rgba(36,41,46,.1)" stroke-width="1"/><path d="M73.4 798.50H939.7" stroke="rgba(36,41,46,.1)" stroke-width="1"/><path d="M73.4 764.50H939.7" stroke="rgba(36,41,46,.1)" stroke-width="1"/><path d="M73.4 730.50H939.7" stroke="rgba(36,41,46,.1)" stroke-width="1"/><path d="M158.50 717V940" stroke="rgba(36,41,46,.1)" stroke-width="1"/><path d="M445.50 717V940" stroke="rgba(36,41,46,.1)" stroke-width="1"/><path d="M733.50 717V940" stroke="rgba(36,41,46,.1)" stroke-width="1"/><path d="M77.00 786.47L86.75 780.50L101.12 767.50L115.49 758.40L129.86 748.50L144.23 941.00L158.60 936.00L172.97 927.50L187.34 916.50L201.71 905.50L216.08 895.50L230.45 885.50L244.82 875.50L259.19 865.50L273.56 854.50L287.93 843.50L302.30 833.50L316.67 822.50L331.04 812.50L345.41 801.50L359.78 791.50L374.15 781.50L388.52 771.60L402.89 956.00L417.26 935.80L431.63 924.50L446.00 913.50L460.37 903.50L474.74 893.50L489.11 883.50L503.48 871.50L517.85 861.50L532.22 851.50L546.59 840.50L560.96 830.50L575.33 820.50L589.70 810.50L604.07 799.50L618.44 788.50L632.81 778.50L647.18 768.50L661.55 757.50L675.92 746.30L690.29 940.00L704.66 933.50L719.03 887.50L733.40 877.50L747.77 866.30L762.14 856.60L776.51 845.60L790.88 835.30L805.25 825.60L819.62 816.40L833.99 805.50L848.36 796.60L862.73 785.40L877.10 775.60L891.47 765.60L905.84 755.50L920.21 744.60L934.58 955.00" fill="none" stroke="#56a64b" stroke-width="1.1" stroke-linejoin="round"/><circle cx="86.75" cy="780.50" r="2.45" fill="#56a64b"/><circle cx="101.12" cy="767.50" r="2.45" fill="#56a64b"/><circle cx="115.49" cy="758.40" r="2.45" fill="#56a64b"/><circle cx="129.86" cy="748.50" r="2.45" fill="#56a64b"/><circle cx="144.23" cy="941.00" r="2.45" fill="#56a64b"/><circle cx="158.60" cy="936.00" r="2.45" fill="#56a64b"/><circle cx="172.97" cy="927.50" r="2.45" fill="#56a64b"/><circle cx="187.34" cy="916.50" r="2.45" fill="#56a64b"/><circle cx="201.71" cy="905.50" r="2.45" fill="#56a64b"/><circle cx="216.08" cy="895.50" r="2.45" fill="#56a64b"/><circle cx="230.45" cy="885.50" r="2.45" fill="#56a64b"/><circle cx="244.82" cy="875.50" r="2.45" fill="#56a64b"/><circle cx="259.19" cy="865.50" r="2.45" fill="#56a64b"/><circle cx="273.56" cy="854.50" r="2.45" fill="#56a64b"/><circle cx="287.93" cy="843.50" r="2.45" fill="#56a64b"/><circle cx="302.30" cy="833.50" r="2.45" fill="#56a64b"/><circle cx="316.67" cy="822.50" r="2.45" fill="#56a64b"/><circle cx="331.04" cy="812.50" r="2.45" fill="#56a64b"/><circle cx="345.41" cy="801.50" r="2.45" fill="#56a64b"/><circle cx="359.78" cy="791.50" r="2.45" fill="#56a64b"/><circle cx="374.15" cy="781.50" r="2.45" fill="#56a64b"/><circle cx="388.52" cy="771.60" r="2.45" fill="#56a64b"/><circle cx="402.89" cy="956.00" r="2.45" fill="#56a64b"/><circle cx="417.26" cy="935.80" r="2.45" fill="#56a64b"/><circle cx="431.63" cy="924.50" r="2.45" fill="#56a64b"/><circle cx="446.00" cy="913.50" r="2.45" fill="#56a64b"/><circle cx="460.37" cy="903.50" r="2.45" fill="#56a64b"/><circle cx="474.74" cy="893.50" r="2.45" fill="#56a64b"/><circle cx="489.11" cy="883.50" r="2.45" fill="#56a64b"/><circle cx="503.48" cy="871.50" r="2.45" fill="#56a64b"/><circle cx="517.85" cy="861.50" r="2.45" fill="#56a64b"/><circle cx="532.22" cy="851.50" r="2.45" fill="#56a64b"/><circle cx="546.59" cy="840.50" r="2.45" fill="#56a64b"/><circle cx="560.96" cy="830.50" r="2.45" fill="#56a64b"/><circle cx="575.33" cy="820.50" r="2.45" fill="#56a64b"/><circle cx="589.70" cy="810.50" r="2.45" fill="#56a64b"/><circle cx="604.07" cy="799.50" r="2.45" fill="#56a64b"/><circle cx="618.44" cy="788.50" r="2.45" fill="#56a64b"/><circle cx="632.81" cy="778.50" r="2.45" fill="#56a64b"/><circle cx="647.18" cy="768.50" r="2.45" fill="#56a64b"/><circle cx="661.55" cy="757.50" r="2.45" fill="#56a64b"/><circle cx="675.92" cy="746.30" r="2.45" fill="#56a64b"/><circle cx="690.29" cy="940.00" r="2.45" fill="#56a64b"/><circle cx="704.66" cy="933.50" r="2.45" fill="#56a64b"/><circle cx="719.03" cy="887.50" r="2.45" fill="#56a64b"/><circle cx="733.40" cy="877.50" r="2.45" fill="#56a64b"/><circle cx="747.77" cy="866.30" r="2.45" fill="#56a64b"/><circle cx="762.14" cy="856.60" r="2.45" fill="#56a64b"/><circle cx="776.51" cy="845.60" r="2.45" fill="#56a64b"/><circle cx="790.88" cy="835.30" r="2.45" fill="#56a64b"/><circle cx="805.25" cy="825.60" r="2.45" fill="#56a64b"/><circle cx="819.62" cy="816.40" r="2.45" fill="#56a64b"/><circle cx="833.99" cy="805.50" r="2.45" fill="#56a64b"/><circle cx="848.36" cy="796.60" r="2.45" fill="#56a64b"/><circle cx="862.73" cy="785.40" r="2.45" fill="#56a64b"/><circle cx="877.10" cy="775.60" r="2.45" fill="#56a64b"/><circle cx="891.47" cy="765.60" r="2.45" fill="#56a64b"/><circle cx="905.84" cy="755.50" r="2.45" fill="#56a64b"/><circle cx="920.21" cy="744.60" r="2.45" fill="#56a64b"/><circle cx="934.58" cy="955.00" r="2.45" fill="#56a64b"/></svg>
<span id="t72" class="t" style="top:926.24px;font-size:12px;color:#5d6063;letter-spacing:0.049px;right:1852.15px;">10.00%</span>
<span id="t73" class="t" style="top:892.24px;font-size:12px;color:#5d6063;letter-spacing:0.049px;right:1852.15px;">15.00%</span>
<span id="t74" class="t" style="top:859.24px;font-size:12px;color:#5d6063;letter-spacing:0.416px;right:1851.78px;">20.00%</span>
<span id="t75" class="t" style="top:825.24px;font-size:12px;color:#5d6063;letter-spacing:0.416px;right:1851.78px;">25.00%</span>
<span id="t76" class="t" style="top:792.24px;font-size:12px;color:#5d6063;letter-spacing:0.416px;right:1851.78px;">30.00%</span>
<span id="t77" class="t" style="top:758.24px;font-size:12px;color:#5d6063;letter-spacing:0.416px;right:1851.78px;">35.00%</span>
<span id="t78" class="t" style="top:724.24px;font-size:12px;color:#5d6063;letter-spacing:0.416px;right:1851.78px;">40.00%</span>
<div class="p" style="left:964px;top:668px;width:940px;height:334px"></div>
<span id="t79" class="t" style="top:678.35px;font-size:14px;color:#24292e;letter-spacing:0.661px;left:972.23px;">JVM<span class="c">内存池使用率</span></span>
<svg class="b" style="left:0;top:0" width="1920" height="937" viewBox="0 0 1920 937"><path d="M1021.4 717.50H1887.3" stroke="rgba(36,41,46,.1)" stroke-width="1"/><path d="M1021.4 753.50H1887.3" stroke="rgba(36,41,46,.1)" stroke-width="1"/><path d="M1021.4 788.50H1887.3" stroke="rgba(36,41,46,.1)" stroke-width="1"/><path d="M1021.4 824.50H1887.3" stroke="rgba(36,41,46,.1)" stroke-width="1"/><path d="M1021.4 859.50H1887.3" stroke="rgba(36,41,46,.1)" stroke-width="1"/><path d="M1021.4 895.50H1887.3" stroke="rgba(36,41,46,.1)" stroke-width="1"/><path d="M1021.4 930.50H1887.3" stroke="rgba(36,41,46,.1)" stroke-width="1"/><path d="M1106.50 717V940" stroke="rgba(36,41,46,.1)" stroke-width="1"/><path d="M1393.50 717V940" stroke="rgba(36,41,46,.1)" stroke-width="1"/><path d="M1681.50 717V940" stroke="rgba(36,41,46,.1)" stroke-width="1"/><path d="M1025.70 909.40L1034.86 909.40L1049.23 913.50L1063.60 913.50L1077.97 913.50L1092.33 913.50L1106.70 913.50L1121.07 919.50L1135.43 919.50L1149.80 919.50L1164.17 919.50L1178.54 919.50L1192.90 919.50L1207.27 919.50L1221.64 919.50L1236.01 909.40L1250.38 909.40L1264.74 909.40L1279.11 909.40L1293.48 909.40L1307.85 909.40L1322.21 909.40L1336.58 889.30L1350.95 887.60L1365.32 890.20L1379.68 890.20L1394.05 878.40L1408.42 878.40L1422.79 878.40L1437.15 878.40L1451.52 878.40L1465.89 878.40L1480.26 882.40L1494.62 882.40L1508.99 882.40L1523.36 882.40L1537.73 882.40L1552.09 882.40L1566.46 882.40L1580.83 882.40L1595.20 882.40L1609.56 882.40L1623.93 877.30L1638.30 877.30L1652.66 756.40L1667.03 756.40L1681.40 756.40L1695.77 743.50L1710.14 745.50L1724.50 745.50L1738.87 745.50L1753.24 740.60L1767.61 740.60L1781.97 740.60L1796.34 740.60L1810.71 744.40L1825.08 747.50L1839.44 747.50L1853.81 747.50L1868.18 747.50L1882.55 747.50" fill="none" stroke="#56a64b" stroke-width="1.1" stroke-linejoin="round"/><circle cx="1034.86" cy="909.40" r="2.45" fill="#56a64b"/><circle cx="1049.23" cy="913.50" r="2.45" fill="#56a64b"/><circle cx="1063.60" cy="913.50" r="2.45" fill="#56a64b"/><circle cx="1077.97" cy="913.50" r="2.45" fill="#56a64b"/><circle cx="1092.33" cy="913.50" r="2.45" fill="#56a64b"/><circle cx="1106.70" cy="913.50" r="2.45" fill="#56a64b"/><circle cx="1121.07" cy="919.50" r="2.45" fill="#56a64b"/><circle cx="1135.43" cy="919.50" r="2.45" fill="#56a64b"/><circle cx="1149.80" cy="919.50" r="2.45" fill="#56a64b"/><circle cx="1164.17" cy="919.50" r="2.45" fill="#56a64b"/><circle cx="1178.54" cy="919.50" r="2.45" fill="#56a64b"/><circle cx="1192.90" cy="919.50" r="2.45" fill="#56a64b"/><circle cx="1207.27" cy="919.50" r="2.45" fill="#56a64b"/><circle cx="1221.64" cy="919.50" r="2.45" fill="#56a64b"/><circle cx="1236.01" cy="909.40" r="2.45" fill="#56a64b"/><circle cx="1250.38" cy="909.40" r="2.45" fill="#56a64b"/><circle cx="1264.74" cy="909.40" r="2.45" fill="#56a64b"/><circle cx="1279.11" cy="909.40" r="2.45" fill="#56a64b"/><circle cx="1293.48" cy="909.40" r="2.45" fill="#56a64b"/><circle cx="1307.85" cy="909.40" r="2.45" fill="#56a64b"/><circle cx="1322.21" cy="909.40" r="2.45" fill="#56a64b"/><circle cx="1336.58" cy="889.30" r="2.45" fill="#56a64b"/><circle cx="1350.95" cy="887.60" r="2.45" fill="#56a64b"/><circle cx="1365.32" cy="890.20" r="2.45" fill="#56a64b"/><circle cx="1379.68" cy="890.20" r="2.45" fill="#56a64b"/><circle cx="1394.05" cy="878.40" r="2.45" fill="#56a64b"/><circle cx="1408.42" cy="878.40" r="2.45" fill="#56a64b"/><circle cx="1422.79" cy="878.40" r="2.45" fill="#56a64b"/><circle cx="1437.15" cy="878.40" r="2.45" fill="#56a64b"/><circle cx="1451.52" cy="878.40" r="2.45" fill="#56a64b"/><circle cx="1465.89" cy="878.40" r="2.45" fill="#56a64b"/><circle cx="1480.26" cy="882.40" r="2.45" fill="#56a64b"/><circle cx="1494.62" cy="882.40" r="2.45" fill="#56a64b"/><circle cx="1508.99" cy="882.40" r="2.45" fill="#56a64b"/><circle cx="1523.36" cy="882.40" r="2.45" fill="#56a64b"/><circle cx="1537.73" cy="882.40" r="2.45" fill="#56a64b"/><circle cx="1552.09" cy="882.40" r="2.45" fill="#56a64b"/><circle cx="1566.46" cy="882.40" r="2.45" fill="#56a64b"/><circle cx="1580.83" cy="882.40" r="2.45" fill="#56a64b"/><circle cx="1595.20" cy="882.40" r="2.45" fill="#56a64b"/><circle cx="1609.56" cy="882.40" r="2.45" fill="#56a64b"/><circle cx="1623.93" cy="877.30" r="2.45" fill="#56a64b"/><circle cx="1638.30" cy="877.30" r="2.45" fill="#56a64b"/><circle cx="1652.66" cy="756.40" r="2.45" fill="#56a64b"/><circle cx="1667.03" cy="756.40" r="2.45" fill="#56a64b"/><circle cx="1681.40" cy="756.40" r="2.45" fill="#56a64b"/><circle cx="1695.77" cy="743.50" r="2.45" fill="#56a64b"/><circle cx="1710.14" cy="745.50" r="2.45" fill="#56a64b"/><circle cx="1724.50" cy="745.50" r="2.45" fill="#56a64b"/><circle cx="1738.87" cy="745.50" r="2.45" fill="#56a64b"/><circle cx="1753.24" cy="740.60" r="2.45" fill="#56a64b"/><circle cx="1767.61" cy="740.60" r="2.45" fill="#56a64b"/><circle cx="1781.97" cy="740.60" r="2.45" fill="#56a64b"/><circle cx="1796.34" cy="740.60" r="2.45" fill="#56a64b"/><circle cx="1810.71" cy="744.40" r="2.45" fill="#56a64b"/><circle cx="1825.08" cy="747.50" r="2.45" fill="#56a64b"/><circle cx="1839.44" cy="747.50" r="2.45" fill="#56a64b"/><circle cx="1853.81" cy="747.50" r="2.45" fill="#56a64b"/><circle cx="1868.18" cy="747.50" r="2.45" fill="#56a64b"/><circle cx="1882.55" cy="747.50" r="2.45" fill="#56a64b"/></svg>
<span id="t80" class="t" style="top:711.24px;font-size:12px;color:#5d6063;letter-spacing:-0.051px;right:904.25px;">24.16%</span>
<span id="t81" class="t" style="top:747.24px;font-size:12px;color:#5d6063;letter-spacing:-0.051px;right:904.25px;">24.14%</span>
<span id="t82" class="t" style="top:782.24px;font-size:12px;color:#5d6063;letter-spacing:-0.051px;right:904.25px;">24.12%</span>
<span id="t83" class="t" style="top:818.24px;font-size:12px;color:#5d6063;letter-spacing:-0.051px;right:904.25px;">24.10%</span>
<span id="t84" class="t" style="top:853.24px;font-size:12px;color:#5d6063;letter-spacing:0.349px;right:903.85px;">24.08%</span>
<span id="t85" class="t" style="top:889.24px;font-size:12px;color:#5d6063;letter-spacing:0.349px;right:903.85px;">24.06%</span>
<span id="t86" class="t" style="top:924.24px;font-size:12px;color:#5d6063;letter-spacing:0.349px;right:903.85px;">24.04%</span>
</body></html>
